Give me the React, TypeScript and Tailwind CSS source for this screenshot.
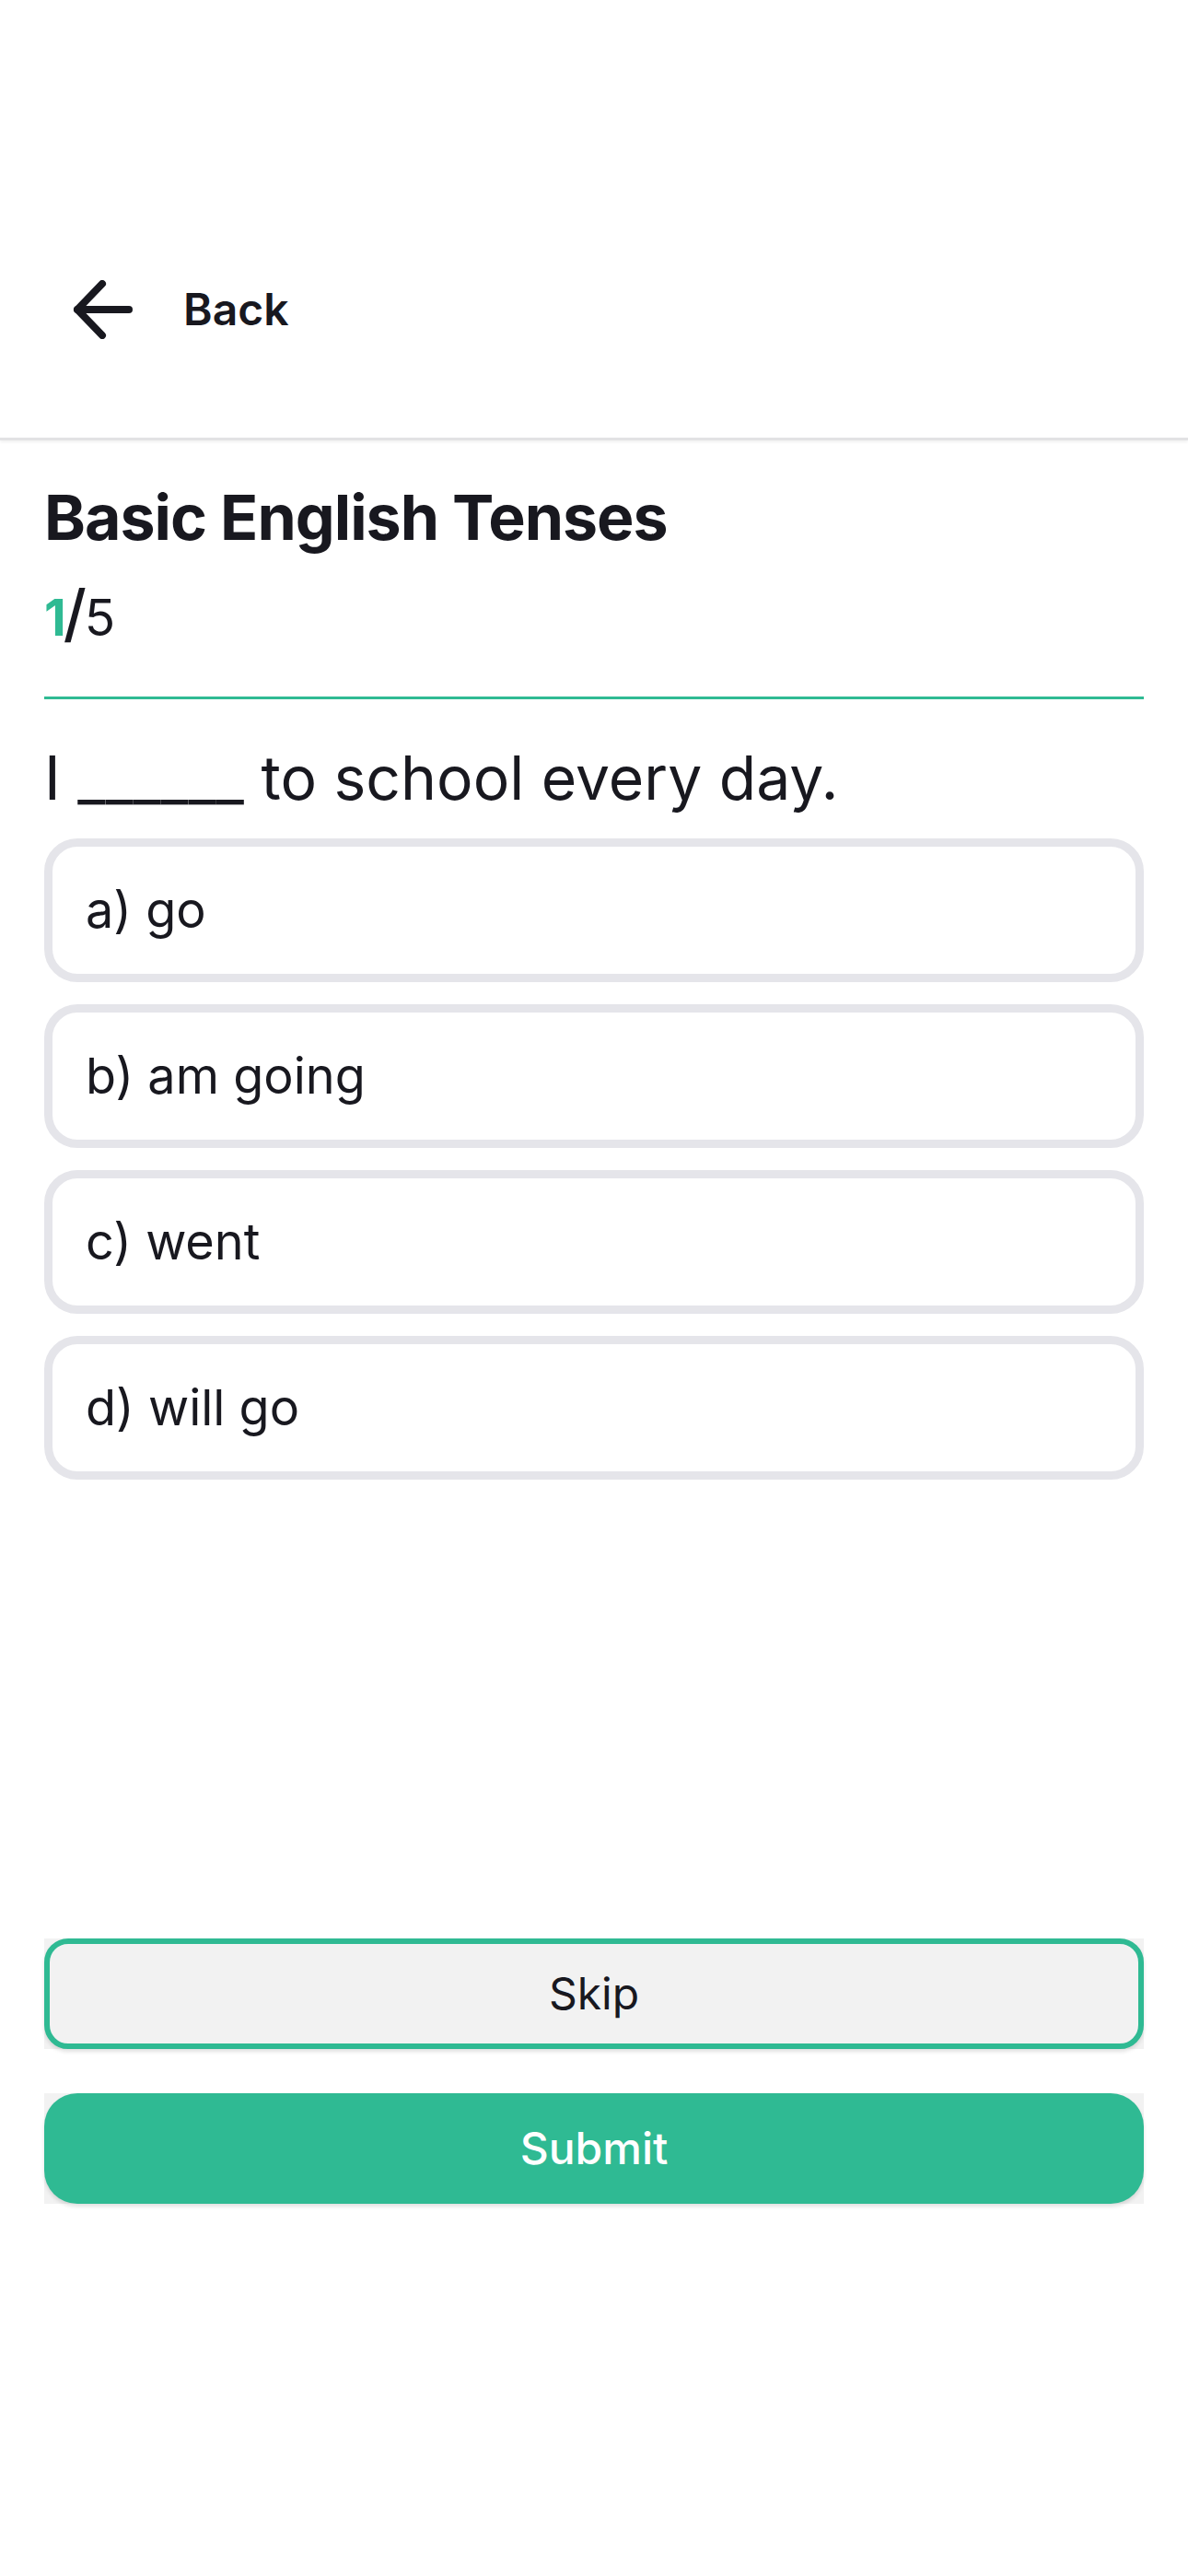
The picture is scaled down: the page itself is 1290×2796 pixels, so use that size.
import React from "react";

const options = ["a) go", "b) am going", "c) went", "d) will go"];

export default function App() {
  return (
    <div className="w-[1290px] h-[2796px] bg-white flex flex-col text-[#18181f]" style={{ fontFamily: "Inter, 'Noto Sans', sans-serif" }}>
      {/* Header */}
      <div className="h-[478px] flex flex-col border-b-[3px] border-[#e2e2e4] shadow-[0_2px_3px_rgba(0,0,0,0.06)]">
        <div className="mt-[276px] h-[120px] flex items-center pl-[78px]">
          <svg width="68" height="64" viewBox="0 0 68 64" fill="none" stroke="#18181f" strokeWidth="8" strokeLinecap="round" strokeLinejoin="round">
            <path d="M33 4 L6 32 L33 60" />
            <path d="M6 32 H62" />
          </svg>
          <span className="ml-[53px] text-[48px] font-semibold leading-none">Back</span>
        </div>
      </div>

      <div className="px-[48px] flex flex-col">
        <h1 className="mt-[42px] text-[68px] font-bold leading-[82px] tracking-[-1px]">Basic English Tenses</h1>
        <div className="mt-[30px] h-[72px] flex items-baseline text-[55px] leading-[66px]">
          <span className="font-bold text-[#2fba93]">1</span>
          <span className="text-[68px] font-medium leading-[66px] -ml-[3px] -mr-[2px]">/</span>
          <span>5</span>
        </div>
        <div className="mt-[52px] h-[3px] bg-[#2fba93]" />
        <p className="mt-[45px] text-[66px] leading-[80px]">I ______ to school every day.</p>

        <div className="mt-[26px] flex flex-col gap-[24px]">
          {options.map((o) => (
            <div key={o} className="h-[156px] border-[9px] border-[#e5e5ea] rounded-[36px] flex items-center px-[36px] bg-white">
              <span className="text-[54px] leading-none">{o}</span>
            </div>
          ))}
        </div>

        <div className="mt-[498px] flex flex-col gap-[48px]">
          <div className="h-[120px] bg-[#f2f2f2]">
            <button className="w-full h-full rounded-[26px] border-[6px] border-[#2fba93] bg-[#f2f2f2] shadow-[0_3px_4px_rgba(0,0,0,0.12)] flex items-center justify-center text-[48px] text-[#18181f]">
              Skip
            </button>
          </div>
          <div className="h-[120px] bg-[#f2f2f2]">
            <button className="w-full h-full rounded-[36px] bg-[#2fba93] shadow-[0_3px_4px_rgba(0,0,0,0.12)] flex items-center justify-center text-[48px] font-medium text-white">
              Submit
            </button>
          </div>
        </div>
      </div>
    </div>
  );
}
